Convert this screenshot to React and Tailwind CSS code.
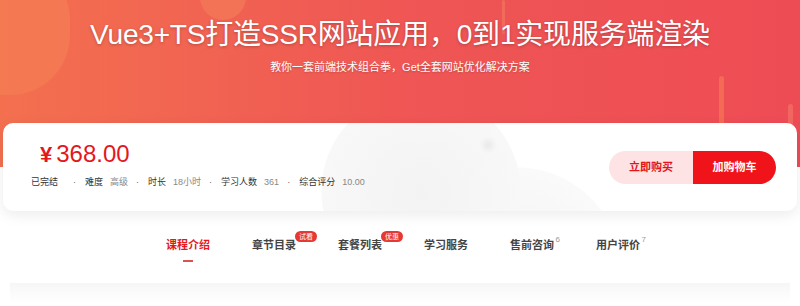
import React from "react";

const cjk = { fontFamily: '"Liberation Sans", "Noto Sans CJK SC", sans-serif' };

const metaItems = [
  { label: "难度", value: "高级" },
  { label: "时长", value: "18小时" },
  { label: "学习人数", value: "361" },
  { label: "综合评分", value: "10.00" },
];

const tabs = [
  { name: "课程介绍", active: true },
  { name: "章节目录", badge: "试看" },
  { name: "套餐列表", badge: "优惠" },
  { name: "学习服务" },
  { name: "售前咨询", sup: "6" },
  { name: "用户评价", sup: "7" },
];

export default function App() {
  return (
    <div className="relative h-[306px] w-full overflow-hidden bg-white" style={cjk}>
      {/* banner */}
      <div className="relative h-[167px] overflow-hidden bg-gradient-to-r from-[#f3704f] via-[#ef5654] to-[#ee4c55]">
        <div className="absolute -left-[60px] -top-[40px] h-[135px] w-[130px] rounded-[60px] bg-[#f58055] opacity-60" />
        <div className="absolute left-[200px] -top-[26px] h-[46px] w-[46px] rounded-full bg-[#f27a58] opacity-70" />
        <div className="absolute left-[502px] top-0 h-[34px] w-[3px] rounded-full bg-[#f26a5a]" />
        <div className="absolute left-[719px] top-[76px] h-[60px] w-[5px] rounded-full bg-[#f36a55]" />
        <div className="absolute left-[788px] top-[104px] h-[30px] w-[5px] rounded-full bg-[#f26660]" />

        <div className="relative flex flex-col items-center pt-[18px]">
          <h1 className="text-[28px] leading-[34px] font-normal tracking-[-0.2px] text-white [text-shadow:0_1px_3px_rgba(0,0,0,0.25)]">
            Vue3+TS打造SSR网站应用，0到1实现服务端渲染
          </h1>
          <p className="mt-[7px] text-[11px] leading-[16px] text-white [text-shadow:0_1px_2px_rgba(0,0,0,0.2)]">
            教你一套前端技术组合拳，Get全套网站优化解决方案
          </p>
        </div>
      </div>

      {/* price card */}
      <div className="relative mx-[3px] -mt-[44px] h-[88px] rounded-[10px] bg-white bg-[radial-gradient(circle_at_485px_22px,#e9e9e9_0px,#f6f6f6_8px,transparent_9px),radial-gradient(circle_at_418px_68px,#f3f3f3_0px,#f8f8f8_99px,transparent_100px),radial-gradient(circle_at_514px_149px,#f3f3f3_0px,#fafafa_104px,transparent_105px)] shadow-[0_4px_14px_rgba(0,0,0,0.08)]">
        <div className="flex h-full items-center justify-between pl-[28px] pr-[21px]">
          <div className="-mt-[7px] flex flex-col">
            <div className="ml-[9px] flex items-baseline text-[#e4171d]">
              <span className="text-[22px] font-semibold leading-[28px]">¥</span>
              <span className="ml-[4px] text-[24px] leading-[28px]">368.00</span>
            </div>
            <div className="mt-[7px] flex items-center text-[9px] leading-[12px]">
              <span className="text-[#333]">已完结</span>
              {metaItems.map((m, i) => (
                <span key={m.label} className="flex items-center">
                  <span className={(i === 0 ? "ml-[15px]" : "ml-[8px]") + " mr-[9px] text-[#666]"}>·</span>
                  <span className="text-[#333]">{m.label}</span>
                  <span className="ml-[7px] text-[#888]">{m.value}</span>
                </span>
              ))}
            </div>
          </div>

          <div className="flex h-[33px] overflow-hidden rounded-full text-[11px] font-bold">
            <button className="w-[84px] bg-[#fde3e3] text-[#e1131b]">立即购买</button>
            <button className="w-[83px] bg-[#f0141a] text-white">加购物车</button>
          </div>
        </div>
      </div>

      {/* tabs */}
      <div className="mt-[27px] flex pl-[166px]">
        {tabs.map((t) => (
          <div key={t.name} className="relative mr-[42px] flex flex-col items-center">
            <span
              className={
                "text-[11px] font-bold leading-[14px] " +
                (t.active ? "text-[#e4171d]" : "text-[#444]")
              }
            >
              {t.name}
            </span>
            {t.active && <span className="mt-[8px] h-[2px] w-[10px] bg-[#d9534f]" />}
            {t.badge && (
              <span className="absolute -right-[21px] -top-[7px] rounded-full bg-[#e53935] px-[4px] text-[7px] leading-[11px] text-white">
                {t.badge}
              </span>
            )}
            {t.sup && (
              <span className="absolute -right-[6px] -top-[4px] text-[8px] font-normal text-[#999]">
                {t.sup}
              </span>
            )}
          </div>
        ))}
      </div>

      <div className="mx-[10px] mt-[21px] h-[20px] bg-gradient-to-b from-[#f6f6f6] to-white" />
    </div>
  );
}
